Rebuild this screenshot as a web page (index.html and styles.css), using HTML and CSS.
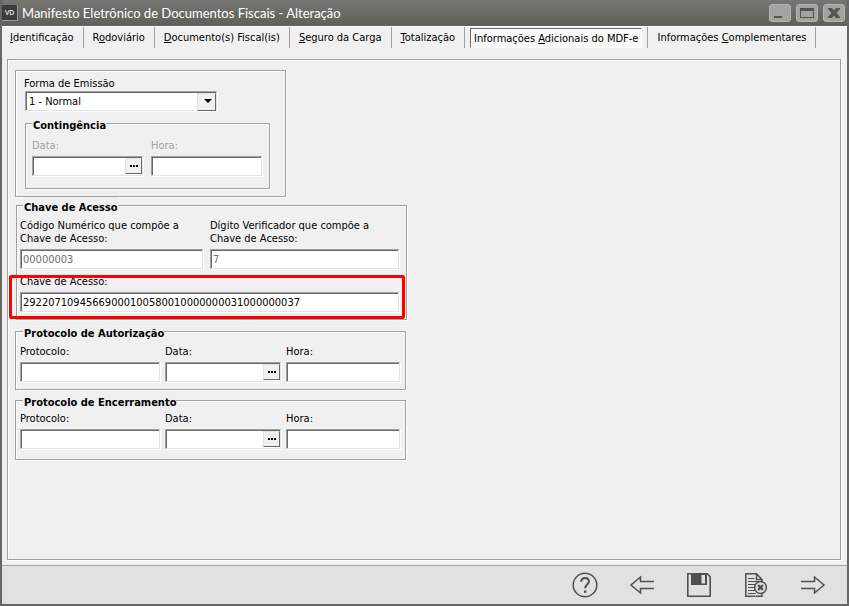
FILE: index.html
```html
<!DOCTYPE html>
<html lang="pt-BR">
<head>
  <meta charset="UTF-8">
  <meta name="viewport" content="width=device-width, initial-scale=1">
  <title>Manifesto Eletrônico de Documentos Fiscais - Alteração</title>
  <link rel="stylesheet" href="styles.css">
</head>
<body>
  <div class="window">
    <header class="titlebar">
      <span class="app-icon">VD</span>
      <h1>Manifesto Eletrônico de Documentos Fiscais - Alteração</h1>
      <div class="window-buttons">
        <button type="button" aria-label="Minimizar">
          <svg width="20" height="16" viewBox="0 0 20 16"><path d="M4 11h8v2H4z" fill="#55554f"/></svg>
        </button>
        <button type="button" aria-label="Maximizar">
          <svg width="20" height="16" viewBox="0 0 20 16"><path d="M3 3h14v10H3zM4 6v6h12V6z" fill="#55554f" fill-rule="evenodd"/></svg>
        </button>
        <button type="button" aria-label="Fechar">
          <svg width="20" height="16" viewBox="0 0 20 16"><path d="M4 3h4l2 2.500 2-2.500h4v1l-3.500 4 3.500 4v1h-4l-2-2.500-2 2.500H4v-1l3.500-4L4 4z" fill="#55554f"/></svg>
        </button>
      </div>
    </header>

    <nav class="tabs">
      <button type="button"><span><u>I</u>dentificação</span></button>
      <button type="button"><span>R<u>o</u>doviário</span></button>
      <button type="button"><span><u>D</u>ocumento(s) Fiscal(is)</span></button>
      <button type="button"><span><u>S</u>eguro da Carga</span></button>
      <button type="button"><span><u>T</u>otalização</span></button>
      <button type="button" class="active"><span>Informações <u>A</u>dicionais do MDF-e</span></button>
      <button type="button"><span>Informações <u>C</u>omplementares</span></button>
    </nav>

    <main class="content">
      <div class="page">
        <section class="group emissao">
          <label for="forma">Forma de Emissão</label>
          <div class="combo">
            <select id="forma">
              <option>1 - Normal</option>
            </select>
          </div>
          <fieldset class="group contingencia">
            <legend>Contingência</legend>
            <div class="field disabled">
              <label for="cont-data">Data:</label>
              <div class="date-box">
                <input type="text" id="cont-data">
                <button type="button" aria-label="Abrir calendário"></button>
              </div>
            </div>
            <div class="field disabled">
              <label for="cont-hora">Hora:</label>
              <input type="text" id="cont-hora" class="box">
            </div>
          </fieldset>
        </section>

        <fieldset class="group chave">
          <legend>Chave de Acesso</legend>
          <div class="field">
            <label for="codigo">Código Numérico que compõe a<br>Chave de Acesso:</label>
            <input type="text" id="codigo" class="box" value="00000003" disabled>
          </div>
          <div class="field">
            <label for="digito">Dígito Verificador que compõe a<br>Chave de Acesso:</label>
            <input type="text" id="digito" class="box" value="7" disabled>
          </div>
          <div class="field highlighted">
            <label for="chave">Chave de Acesso:</label>
            <input type="text" id="chave" class="box" value="29220710945669000100580010000000031000000037">
          </div>
        </fieldset>

        <fieldset class="group protocolo">
          <legend>Protocolo de Autorização</legend>
          <div class="field">
            <label for="aut-protocolo">Protocolo:</label>
            <input type="text" id="aut-protocolo" class="box">
          </div>
          <div class="field">
            <label for="aut-data">Data:</label>
            <div class="date-box">
              <input type="text" id="aut-data">
              <button type="button" aria-label="Abrir calendário"></button>
            </div>
          </div>
          <div class="field">
            <label for="aut-hora">Hora:</label>
            <input type="text" id="aut-hora" class="box">
          </div>
        </fieldset>

        <fieldset class="group protocolo encerramento">
          <legend>Protocolo de Encerramento</legend>
          <div class="field">
            <label for="enc-protocolo">Protocolo:</label>
            <input type="text" id="enc-protocolo" class="box">
          </div>
          <div class="field">
            <label for="enc-data">Data:</label>
            <div class="date-box">
              <input type="text" id="enc-data">
              <button type="button" aria-label="Abrir calendário"></button>
            </div>
          </div>
          <div class="field">
            <label for="enc-hora">Hora:</label>
            <input type="text" id="enc-hora" class="box">
          </div>
        </fieldset>
      </div>
    </main>

    <footer class="toolbar">
      <button type="button" aria-label="Ajuda">
        <svg viewBox="0 0 26 26"><circle cx="13" cy="13" r="11.800"/><path d="M9.300 9.800c0-2.300 1.500-3.800 3.800-3.800s3.800 1.400 3.800 3.500c0 3-3.700 3.200-3.700 6.700" stroke-width="2"/><path d="M12 18.500h2.400v2.300H12z" class="solid"/></svg>
      </button>
      <button type="button" aria-label="Anterior">
        <svg viewBox="0 0 26 26"><path d="M25 9.500H11.500V5L2 13l9.500 8v-4.500H25"/></svg>
      </button>
      <button type="button" aria-label="Salvar">
        <svg viewBox="0 0 26 26"><path d="M1.800 1.800h19.400l3 3v19.400H1.800z" stroke-width="1.600"/><path d="M5 1.500h16v11.500H5zM15.500 3v8.500h3.500V3z" class="solid" fill-rule="evenodd"/></svg>
      </button>
      <button type="button" aria-label="Cancelar">
        <svg viewBox="0 0 26 26"><path d="M12.500 24.200H2.800V1.800h10.700l5.500 5.700v3M13.500 1.800v5.700H19M13 24.200h6v-2"/><path d="M5 6.500h6.500M5 9.500h11.500M5 12.500h8M5 15.500h6M5 18.500h7M5 21.500h8" stroke-width="1.100"/><circle cx="17.500" cy="15.500" r="5.900"/><path d="M15.100 13.100l4.800 4.800M19.900 13.100l-4.800 4.800" stroke-width="2.200"/></svg>
      </button>
      <button type="button" aria-label="Próximo">
        <svg viewBox="0 0 26 26"><path d="M1 9.500h13.500V5l9.500 8-9.500 8v-4.500H1"/></svg>
      </button>
    </footer>
  </div>
</body>
</html>
```
FILE: styles.css
```css
:root {
  --face: #f0f0f0;
  --line: #a0a0a0;
  --dark: #696969;
  --frame: #666662;
}

* {
  box-sizing: border-box;
}

body {
  margin: 0;
  color: #000;
  font-family: "DejaVu Sans Condensed", Tahoma, sans-serif;
  font-size: 11px;
  line-height: 13px;
}

button,
input,
select {
  margin: 0;
  padding: 0;
  border: 0;
  border-radius: 0;
  color: inherit;
  font: inherit;
}

.window {
  display: flex;
  flex-direction: column;
  min-height: 100vh;
  padding: 0 2px 2px;
  background: var(--frame);
}

/* title bar */
.titlebar {
  display: flex;
  align-items: center;
  height: 26px;
  background: linear-gradient(#767672, #60605a);
}

.titlebar h1 {
  flex: 1;
  margin: 0 0 0 4px;
  color: #fff;
  font: 13px/20px Lato, "Segoe UI", sans-serif;
}

.app-icon {
  width: 16px;
  height: 16px;
  border-right: 1px solid #999;
  border-bottom: 1px solid #999;
  background: #3c3c3c;
  color: #ddd;
  font: bold 7px/15px "Liberation Sans", sans-serif;
  text-align: center;
}

.window-buttons {
  display: flex;
  gap: 5px;
  padding-right: 2px;
}

.window-buttons button {
  width: 22px;
  height: 18px;
  border: 1px solid #b4b4b0;
  border-radius: 3px;
  background: #a3a3a0;
}

.window-buttons svg {
  display: block;
}

/* tabs */
.tabs {
  display: flex;
  padding-bottom: 3px;
  border-top: 1px solid #fff;
  background: var(--face);
}

.tabs button {
  height: 21px;
  padding: 0 9px;
  border-right: 1px solid var(--line);
  background: none;
  line-height: 19px;
  white-space: nowrap;
}

.tabs button:first-child {
  padding-left: 8px;
}

.tabs .active {
  padding: 1px 5px 0;
}

.tabs .active span {
  display: block;
  height: 20px;
  padding: 0 3px;
  border: 1px solid #fff;
  border-top-color: var(--dark);
  border-left-color: var(--dark);
  background: #f8f8f8;
}

/* page */
.content {
  flex: 1;
  display: flex;
  padding: 8px 6px 5px 5px;
  background: var(--face);
}

.page {
  flex: 1;
  display: flex;
  flex-direction: column;
  align-items: flex-start;
  padding: 10px 7px;
  border: 1px solid var(--line);
  box-shadow: 1px 1px 0 #fff, inset 1px 1px 0 #fff;
}

.group {
  min-width: 0;
  margin: 0;
  border: 1px solid var(--line);
  box-shadow: 1px 1px 0 #fff, inset 1px 1px 0 #fff;
}

legend {
  margin-left: 3px;
  padding: 4px 0 0 1px;
  background: var(--face);
  font-weight: bold;
}

label {
  display: block;
}

.emissao {
  width: 271px;
  padding: 6px 15px 7px 8px;
}

.contingencia {
  display: grid;
  grid-template-columns: 111px 111px;
  gap: 8px;
  margin: 4px 0 0 1px;
  padding: 7px 6px 12px;
}

.contingencia legend {
  margin-left: 0;
}

.chave {
  display: grid;
  grid-template-columns: 183px 189px;
  gap: 6px 7px;
  width: 391px;
  margin-left: 1px;
  padding: 5px 3px 7px;
}

.protocolo {
  display: grid;
  grid-template-columns: 140px 116px 114px;
  gap: 5px;
  width: 391px;
  margin-top: 3px;
  padding: 5px 3px 7px 4px;
}

.encerramento {
  margin-top: 2px;
  padding: 3px 3px 10px 4px;
}

.field label {
  margin-bottom: 4px;
}

.disabled label {
  color: var(--line);
}

.box,
.date-box,
.combo {
  display: block;
  width: 100%;
  height: 20px;
  border: 1px solid #e3e3e3;
  border-top-color: var(--line);
  border-left-color: var(--line);
  background: #fff;
  box-shadow: inset 1px 1px 0 var(--dark), 1px 1px 0 #fff;
}

.box {
  padding: 1px 2px 0;
}

.box:disabled {
  color: #6d6d6d;
}

.date-box {
  display: flex;
  padding: 1px 0 1px 1px;
}

.date-box input {
  flex: 1;
  min-width: 0;
  background: none;
}

.date-box button {
  display: flex;
  align-items: center;
  justify-content: center;
  width: 17px;
  border: 1px solid #e3e3e3;
  border-right-color: var(--dark);
  border-bottom-color: var(--dark);
  background: var(--face);
}

.date-box button::before {
  content: "";
  width: 8px;
  height: 2px;
  background: repeating-linear-gradient(90deg, #000 0 2px, transparent 2px 3px);
}

.combo {
  position: relative;
  width: 192px;
  margin: 1px 0 0 1px;
}

.combo select {
  appearance: none;
  display: block;
  width: 100%;
  height: 18px;
  padding: 0 20px 0 3px;
  background: none;
}

.combo::before {
  content: "";
  position: absolute;
  top: 1px;
  right: 0;
  width: 17px;
  height: 16px;
  border: 1px solid #e3e3e3;
  border-right-color: var(--dark);
  border-bottom-color: var(--dark);
  background: var(--face);
  pointer-events: none;
}

.combo::after {
  content: "";
  position: absolute;
  top: 7px;
  right: 4px;
  border: 4px solid transparent;
  border-top-color: #000;
  border-bottom: 0;
  pointer-events: none;
}

.highlighted {
  position: relative;
  grid-column: 1 / -1;
}

.highlighted::after {
  content: "";
  position: absolute;
  inset: 0 -6px -7px -11px;
  border: 3px solid #f00;
  border-radius: 2px;
  pointer-events: none;
}

/* bottom toolbar */
.toolbar {
  display: flex;
  justify-content: flex-end;
  gap: 31px;
  padding: 6px 21px 6px 0;
  border-top: 1px solid var(--line);
  background: #e1e1e1;
}

.toolbar button {
  width: 26px;
  height: 26px;
  background: none;
}

.toolbar svg {
  display: block;
  fill: none;
  stroke: #505050;
  stroke-width: 1.500;
}

.toolbar .solid {
  fill: #505050;
  stroke: none;
}
```
